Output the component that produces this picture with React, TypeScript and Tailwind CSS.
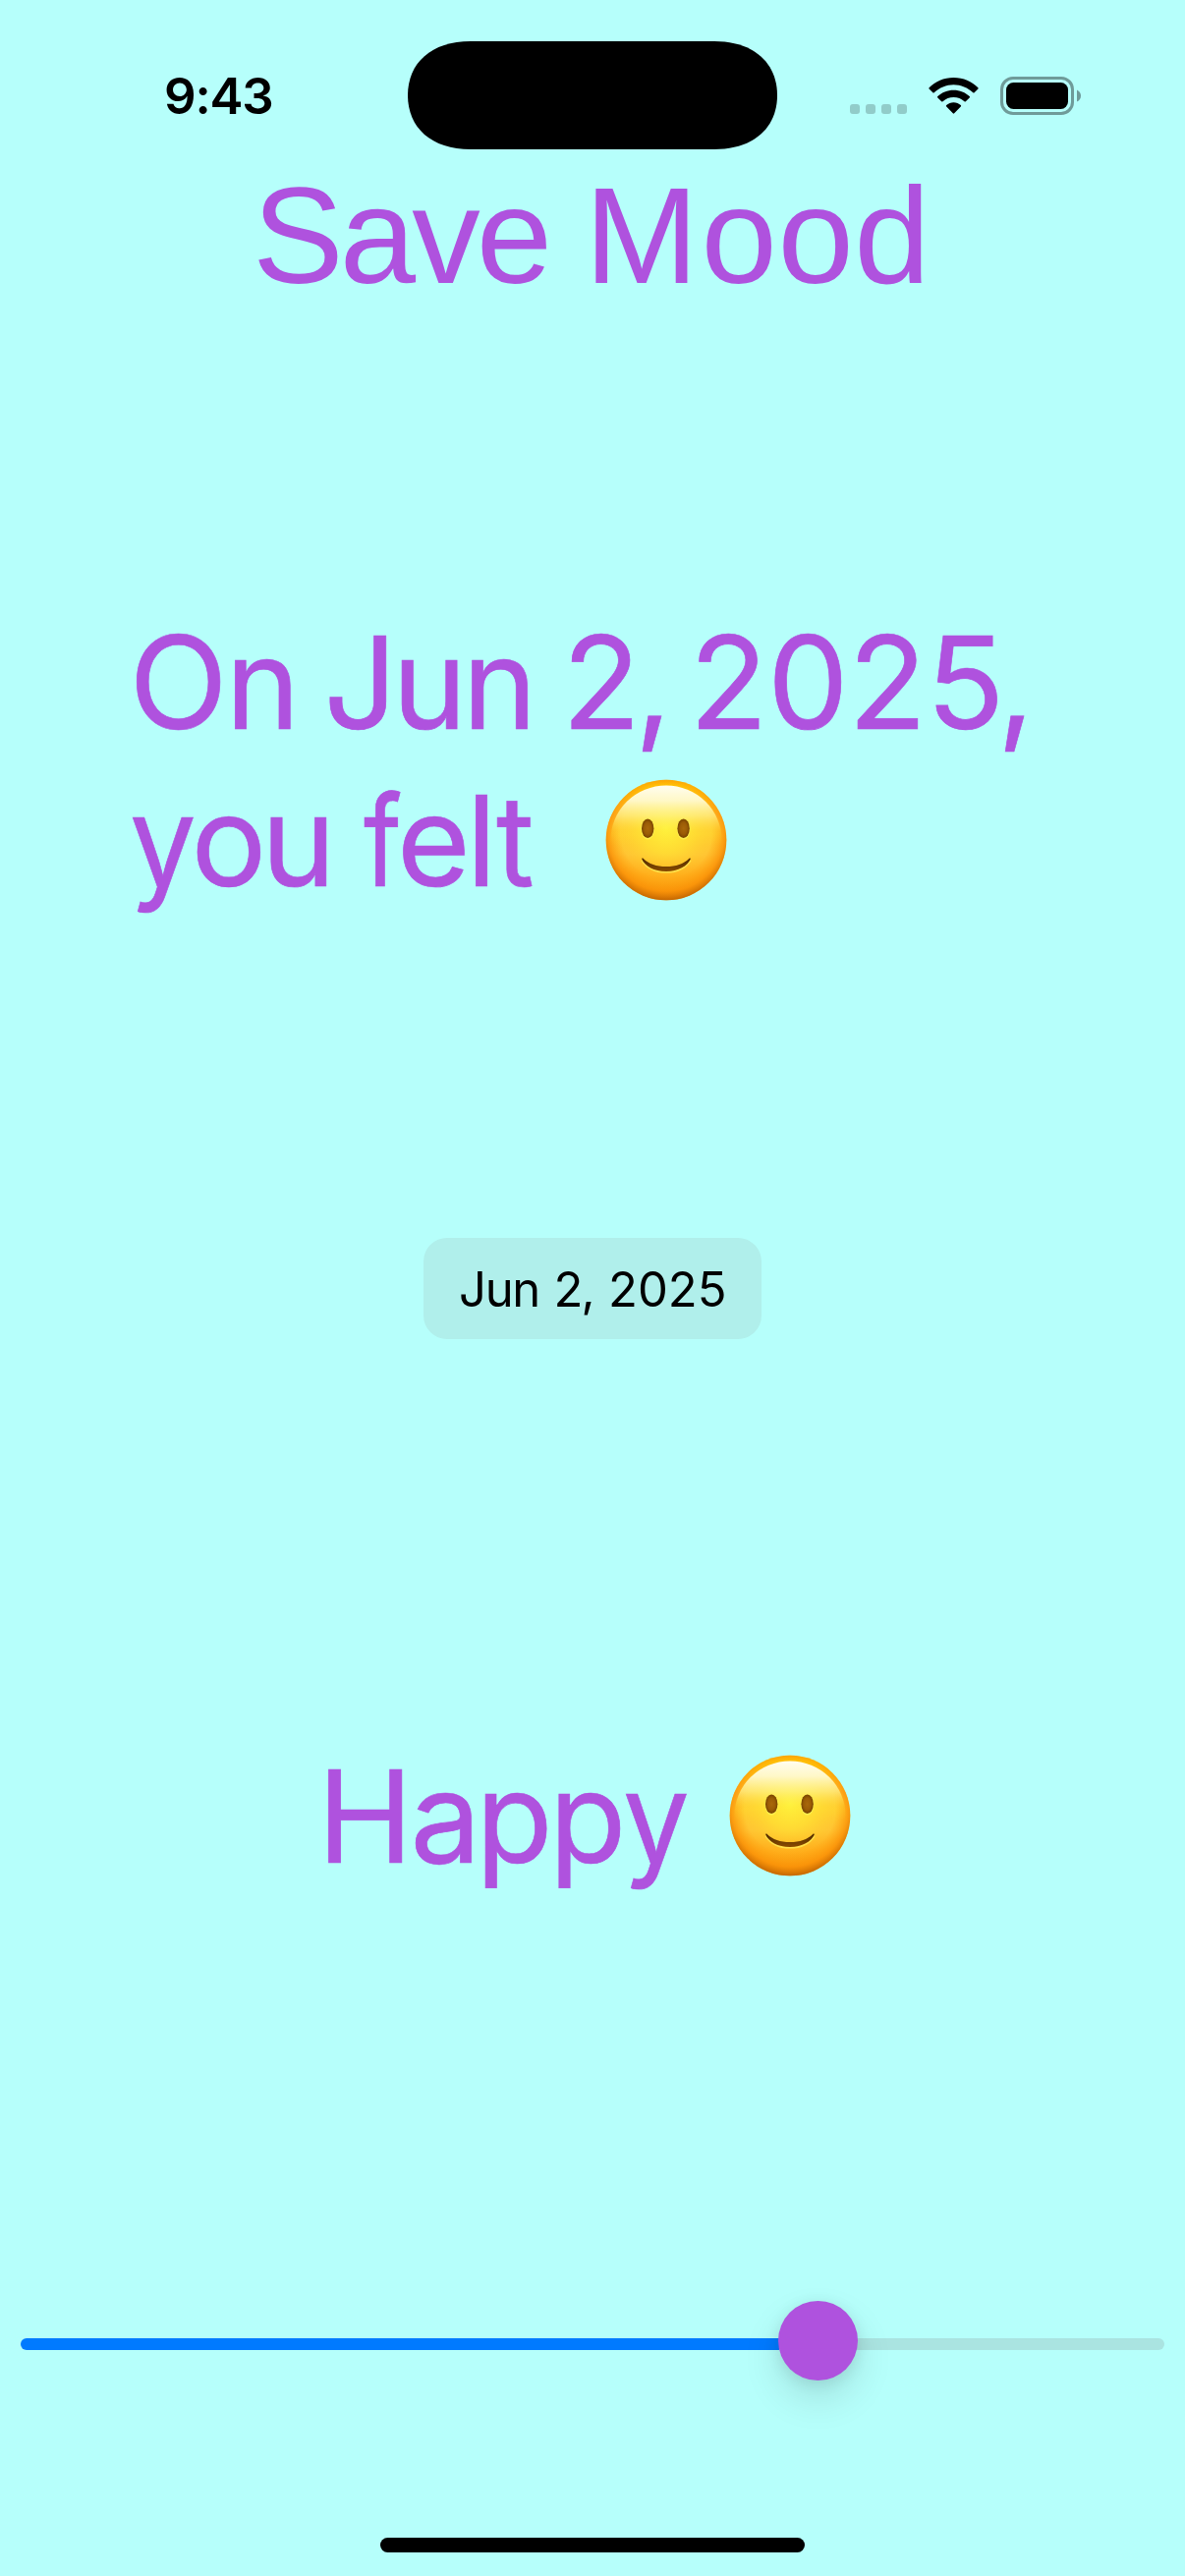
import React from "react";

function Smiley({ id, className }: { id: string; className: string }) {
  return (
    <svg viewBox="0 0 124 124" className={className} role="img" aria-label="Slightly smiling face">
      <defs>
        <linearGradient id={`${id}-base`} x1="0" y1="0" x2="0" y2="1">
          <stop offset="0" stopColor="#ffae00" />
          <stop offset="0.05" stopColor="#ffc400" />
          <stop offset="0.3" stopColor="#ffba2a" />
          <stop offset="0.45" stopColor="#ffcc2e" />
          <stop offset="0.62" stopColor="#ffc433" />
          <stop offset="0.8" stopColor="#ffad1a" />
          <stop offset="1" stopColor="#f5980c" />
        </linearGradient>
        <radialGradient id={`${id}-edge`} cx="0.5" cy="0.44" r="0.57">
          <stop offset="0.66" stopColor="#ff9d0a" stopOpacity="0" />
          <stop offset="0.85" stopColor="#fa8f06" stopOpacity="0.75" />
          <stop offset="1" stopColor="#bb6000" stopOpacity="1" />
        </radialGradient>
        <radialGradient id={`${id}-glow`} cx="0.5" cy="0.4" r="0.42">
          <stop offset="0" stopColor="#fff33c" />
          <stop offset="0.5" stopColor="#ffe834" stopOpacity="0.6" />
          <stop offset="1" stopColor="#ffd430" stopOpacity="0" />
        </radialGradient>
        <linearGradient id={`${id}-gloss`} x1="0" y1="0" x2="0" y2="1">
          <stop offset="0" stopColor="#fffdf0" />
          <stop offset="0.14" stopColor="#fffad0" stopOpacity="0.95" />
          <stop offset="0.28" stopColor="#fff68c" stopOpacity="0.7" />
          <stop offset="0.42" stopColor="#ffec40" stopOpacity="0.2" />
          <stop offset="0.55" stopColor="#ffdc30" stopOpacity="0" />
        </linearGradient>
        <linearGradient id={`${id}-mouth`} x1="0" y1="0" x2="0" y2="1">
          <stop offset="0" stopColor="#4d2900" />
          <stop offset="1" stopColor="#8a4c00" />
        </linearGradient>
        <radialGradient id={`${id}-eye`}>
          <stop offset="0" stopColor="#a9680a" />
          <stop offset="0.6" stopColor="#9b5c06" />
          <stop offset="1" stopColor="#774300" />
        </radialGradient>
      </defs>
      <circle cx="62" cy="62" r="61.3" fill={`url(#${id}-base)`} />
      <circle cx="62" cy="62" r="61.3" fill={`url(#${id}-glow)`} />
      <circle cx="62" cy="62" r="61.3" fill={`url(#${id}-edge)`} />
      <ellipse cx="62" cy="62" rx="56.500" ry="55.500" fill={`url(#${id}-gloss)`} />
      <ellipse cx="43.2" cy="51" rx="6.8" ry="10.6" fill="#fff04d" />
      <ellipse cx="79.6" cy="51" rx="6.8" ry="10.6" fill="#fff04d" />
      <ellipse cx="43.2" cy="50.2" rx="6.2" ry="9.8" fill={`url(#${id}-eye)`} />
      <ellipse cx="79.6" cy="50.2" rx="6.2" ry="9.8" fill={`url(#${id}-eye)`} />
      <path d="M37.200 83Q45 94.800 62 94.800T86.800 83" fill="none" stroke="#ffe04a" strokeWidth="1.6" />
      <path
        d="M37.200 81.200C37 80.600 38.200 80.300 38.800 81C44.500 86.600 52 89 62 89S79.500 86.600 85.200 81C85.800 80.300 87 80.600 86.800 81.300C84 88.500 74 94 62 94S40 88.500 37.200 81.200Z"
        fill={`url(#${id}-mouth)`}
      />
    </svg>
  );
}

function StatusBar() {
  return (
    <header className="flex h-[159px] shrink-0 items-start">
      <div className="w-[415px] pl-[167px] pt-[67px] text-[51px] font-semibold leading-[62px] tracking-[-1.2px] text-black">
        9:43
      </div>
      <div className="mt-[42px] h-[110px] w-[376px] shrink-0">
        <svg viewBox="0 0 376 110" className="block h-full w-full">
          <path d="M64 0H312C352 0 376 22 376 55S352 110 312 110H64C24 110 0 88 0 55S24 0 64 0Z" />
        </svg>
      </div>
      <div className="ml-[74px] mt-[78px] flex h-[39px] items-start">
        <div className="mt-[28px] flex gap-1.5">
          <i className="size-[10px] rounded-[3px] bg-[#91ccc9]" />
          <i className="size-[10px] rounded-[3px] bg-[#91ccc9]" />
          <i className="size-[10px] rounded-[3px] bg-[#91ccc9]" />
          <i className="size-[10px] rounded-[3px] bg-[#91ccc9]" />
        </div>
        <svg viewBox="0 0 51 37" className="ml-[22px] mt-px h-[37px] w-[51px]">
          <path d="M25.500 0C35.500 0 44 4 50.400 10.200Q51 10.900 50.400 11.500L46.600 15.200Q46 15.800 45.300 15.200C40 10.200 33 7.200 25.500 7.200S11 10.200 5.700 15.200Q5 15.800 4.400 15.200L.6 11.500Q0 10.900 .6 10.200C7 4 15.500 0 25.500 0Z" />
          <path d="M25.500 12.700C31.800 12.700 37.400 15.100 41.700 19.100Q42.400 19.800 41.700 20.500L37.800 24.300Q37.200 24.900 36.500 24.300C33.500 21.500 29.700 20 25.500 20S17.500 21.500 14.500 24.300Q13.800 24.900 13.200 24.300L9.300 20.500Q8.600 19.800 9.300 19.100C13.600 15.100 19.200 12.700 25.500 12.700Z" />
          <path d="M25.500 25.300C28.300 25.300 30.900 26.400 32.800 28.100Q33.500 28.800 32.800 29.500L26.200 36.300Q25.500 37 24.800 36.300L18.200 29.500Q17.500 28.800 18.200 28.100C20.100 26.400 22.700 25.300 25.500 25.300Z" />
        </svg>
        <svg viewBox="0 0 82 39" className="ml-[22px] h-[39px] w-[82px]">
          <rect x="1.500" y="1.500" width="72" height="36" rx="11.500" fill="none" stroke="#6f9b99" strokeWidth="3" />
          <rect x="6" y="6" width="63" height="27" rx="7.500" />
          <path d="M78 13.500Q82 15.500 82 19.500T78 25.500Z" fill="#6f9b99" />
        </svg>
      </div>
    </header>
  );
}

export default function App() {
  return (
    <main className="flex h-[2622px] w-[1206px] flex-col overflow-hidden bg-[#b6fffb] font-['Inter',sans-serif] text-[#af52de]">
      <StatusBar />
      <h1 className="flex h-[160px] shrink-0 whitespace-nowrap pl-[257px] pt-px font-['Liberation_Sans',sans-serif] text-[139px] font-normal leading-[160px]">
        <span className="w-[338px] tracking-[-3.9px]">Save </span>
        <span className="tracking-[0.6px]">
          <span className="tracking-[2.7px]">M</span>ood
        </span>
      </h1>

      <section className="mt-[295px] h-[322px] shrink-0 whitespace-nowrap pl-[131.5px] text-[131px] leading-[161px] [-webkit-text-stroke:0.7px_#af52de]">
        <div className="flex h-[161px]">
          <span className="w-[198px]">
            <span className="tracking-[-2.2px]">O</span>
            <span className="text-[128px]">n </span>
          </span>
          <span className="w-[242.5px]">
            <span className="tracking-[-5px]">J</span>
            <span className="text-[128px] tracking-[-4.3px]">un </span>
          </span>
          <span className="w-[129.5px] tracking-[-6px]">2, </span>
          <span className="tracking-[-0.4px]">
            202<span className="tracking-[-7.3px]">5</span>,
          </span>
        </div>
        <div className="flex h-[161px] items-start">
          <span className="flex w-[238.5px] text-[128px] tracking-[-5.3px]">
            <span className="w-[63px] origin-left scale-x-[0.94] tracking-normal">y</span>
            <span>ou </span>
          </span>
          <span className="flex w-[248.5px] text-[128px]">
            <span className="w-[34px] origin-left scale-x-[0.82]">f</span>
            <span className="tracking-[-4.2px]">e</span>
            <span className="tracking-[-0.5px]">l</span>
            <span className="origin-left scale-x-[0.92]">t</span>
          </span>
          <Smiley id="felt" className="-ml-[2.5px] mt-[18px] size-[124px]" />
        </div>
      </section>

      <button className="mt-[324px] flex h-[103px] w-[344px] shrink-0 items-center self-center whitespace-nowrap rounded-[24px] bg-[#b0efeb] pl-9 pt-[2px] text-left text-[49px] text-black">
        <span className="w-[96.5px] tracking-[-1.3px]">Jun </span>
        <span className="w-[55.5px] tracking-[-2px]">2, </span>
        <span>2025</span>
      </button>

      <section className="mt-[405px] flex h-[161px] shrink-0 items-start whitespace-nowrap pl-[323px] text-[131px] leading-[161px] [-webkit-text-stroke:0.7px_#af52de]">
        <span className="flex w-[419px] items-baseline">
          <span className="tracking-[-2.8px]">H</span>
          <span className="text-[128px] tracking-[-5.3px]">a</span>
          <span className="text-[128px] tracking-[-3.4px]">pp</span>
          <span className="origin-left scale-x-[0.94] text-[128px]">y</span>
        </span>
        <Smiley id="happy" className="mt-[18px] size-[124px]" />
      </section>

      <div className="mx-[21px] mt-[413px] flex h-[81px] shrink-0 items-center">
        <div className="mt-[7px] h-3 w-[772px] rounded-l-full bg-[#007aff]" />
        <div className="z-10 -ml-px size-[81px] shrink-0 rounded-full bg-[#af52de] shadow-[0_18px_39px_rgba(0,0,0,0.12),0_3px_16px_rgba(0,0,0,0.09)]" />
        <div className="-ml-2 mt-[7px] h-3 flex-1 rounded-r-full bg-[#aae4e1]" />
      </div>

      <div className="mt-[160px] h-[15px] w-[432px] shrink-0 self-center rounded-full bg-black" />
    </main>
  );
}
